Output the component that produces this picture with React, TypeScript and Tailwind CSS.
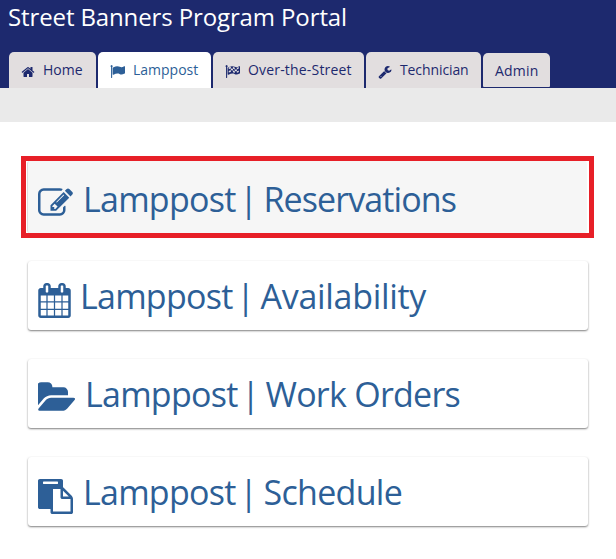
import type { ReactNode } from "react";

type IconProps = { d: string; box: string; className: string };

function Icon({ d, box, className }: IconProps) {
  return (
    <svg viewBox={box} fill="currentColor" className={className} aria-hidden="true">
      <path d={d} fillRule="evenodd" />
    </svg>
  );
}

const HOME =
  "M1472 992v480q0 26-19 45t-45 19h-384v-384h-256v384h-384q-26 0-45-19t-19-45v-480q0-1 .5-3t.5-3l575-474 575 474q1 2 1 6zm223-69l-62 74q-8 9-21 11h-3q-13 0-21-7l-692-577-692 577q-12 8-24 7-13-2-21-11l-62-74q-8-10-7-23.5t11-21.5l719-599q32-26 76-26t76 26l244 204v-195q0-14 9-23t23-9h192q14 0 23 9t9 23v408l219 182q10 8 11 21.5t-7 23.5z";
const FLAG =
  "M320 256q0 72-64 110v1266q0 13-9.5 22.5t-22.5 9.5h-64q-13 0-22.5-9.5t-9.5-22.5v-1266q-64-38-64-110 0-53 37.5-90.5t90.5-37.5 90.5 37.5 37.5 90.5zm1472 64v763q0 25-12.5 38.5t-39.5 27.5q-215 116-369 116-61 0-123.5-22t-108.5-48-115.5-48-142.5-22q-192 0-464 146-17 9-33 9-26 0-45-19t-19-45v-742q0-32 31-55 21-14 79-43 236-120 421-120 107 0 200 29t219 88q38 19 88 19 54 0 117.5-21t110-47 88-47 54.5-21q26 0 45 19t19 45z";
const CHECKERED =
  FLAG +
  "M448 420q130-68 250-84v210q-120 12-250 82zM948 362q110 28 220 84v210q-100-52-220-84zM1418 442q110-28 230-98v208q-110 66-230 96zM698 546q130-14 250 26v210q-120-34-250-24zM1168 656q120 28 250-8v208q-130 34-250 10zM448 838q130-68 250-80v196q-120 8-250 72zM948 782q110 24 220 84v206q-110-58-220-84zM1418 856q120-34 230-94v206q-110 60-230 88z";
const WRENCH =
  "M448 1472q0-26-19-45t-45-19-45 19-19 45 19 45 45 19 45-19 19-45zm644-420l-682 682q-37 37-90 37-52 0-91-37l-106-108q-38-36-38-90 0-53 38-91l681-681q39 98 114.5 173.5t173.5 114.5zm634-435q0 39-23 106-47 134-164.5 217.5t-258.5 83.5q-185 0-316.5-131.5t-131.5-316.5 131.5-316.5 316.5-131.5q58 0 121.5 16.5t107.5 46.5q16 11 16 28t-16 28l-293 169v224l193 107q5-3 79-48.5t135.5-81 70.5-35.5q15 0 23.5 10t8.5 25z";
const EDIT =
  "M888 1184l116-116-152-152-116 116v56h96v96h56zm440-720q-16-16-33 1l-350 350q-17 17-1 33t33-1l350-350q17-17 1-33zm80 594v190q0 119-84.5 203.5t-203.5 84.5h-832q-119 0-203.5-84.5t-84.5-203.5v-832q0-119 84.5-203.5t203.5-84.5h832q63 0 117 25 15 7 18 23 3 17-9 29l-49 49q-14 14-32 8-23-6-45-6h-832q-66 0-113 47t-47 113v832q0 66 47 113t113 47h832q66 0 113-47t47-113v-126q0-13 9-22l64-64q15-15 35-7t20 29zm-96-738l288 288-672 672h-288v-288zm444 132l-92 92-288-288 92-92q28-28 68-28t68 28l152 152q28 28 28 68t-28 68z";
const CALENDAR =
  "M192 1664h288v-288h-288v288zm352 0h320v-288h-320v288zm-352-352h288v-320h-288v320zm352 0h320v-320h-320v320zm-352-384h288v-288h-288v288zm736 736h320v-288h-320v288zm-384-736h320v-288h-320v288zm768 736h288v-288h-288v288zm-384-352h320v-320h-320v320zm-352-864v-288q0-13-9.5-22.5t-22.5-9.5h-64q-13 0-22.5 9.5t-9.5 22.5v288q0 13 9.5 22.5t22.5 9.5h64q13 0 22.5-9.5t9.5-22.5zm736 864h288v-320h-288v320zm-384-384h320v-288h-320v288zm384 0h288v-288h-288v288zm32-480v-288q0-13-9.5-22.5t-22.5-9.5h-64q-13 0-22.5 9.5t-9.5 22.5v288q0 13 9.5 22.5t22.5 9.5h64q13 0 22.5-9.5t9.5-22.5zm384-64v1280q0 52-38 90t-90 38h-1408q-52 0-90-38t-38-90v-1280q0-52 38-90t90-38h128v-96q0-66 47-113t113-47h64q66 0 113 47t47 113v96h384v-96q0-66 47-113t113-47h64q66 0 113 47t47 113v96h128q52 0 90 38t38 90z";
const FOLDER =
  "M1815 952q0 31-31 66l-336 396q-43 51-120.5 86.5t-143.5 35.5h-1088q-34 0-60.5-13t-26.5-43q0-31 31-66l336-396q43-51 120.5-86.5t143.5-35.5h1088q34 0 60.5 13t26.5 43zm-343-344v160h-832q-94 0-197 47.5t-164 119.5l-337 396-5 6q0-4-.5-12.5t-.5-12.5v-960q0-92 66-158t158-66h320q92 0 158 66t66 158v32h544q92 0 158 66t66 158z";
const PASTE =
  "M768 1664h896v-640h-416q-40 0-68-28t-28-68v-416h-384v1152zm256-1440v-64q0-13-9.5-22.5t-22.5-9.5h-704q-13 0-22.5 9.5t-9.5 22.5v64q0 13 9.5 22.5t22.5 9.5h704q13 0 22.5-9.5t9.5-22.5zm256 672h299l-299-299v299zm512 128v672q0 40-28 68t-68 28h-960q-40 0-68-28t-28-68v-160h-544q-40 0-68-28t-28-68v-1344q0-40 28-68t68-28h1088q40 0 68 28t28 68v328q21 13 36 28l408 408q28 28 48 76t20 88z";

function Tab({ className, children }: { className: string; children: ReactNode }) {
  return (
    <a className={`flex shrink-0 items-center whitespace-nowrap rounded-t-[5px] text-[14px] leading-none ${className}`}>
      {children}
    </a>
  );
}

function Card({ className, children }: { className: string; children: ReactNode }) {
  return <a className={`flex items-start rounded-[3px] pl-[10px] ${className}`}>{children}</a>;
}

function Title({ text, className }: { text: string; className: string }) {
  return (
    <span className="flex whitespace-nowrap pl-[10px] text-[34px] leading-[48px]">
      <span className="tracking-[-0.75px]">Lamppost</span>
      <span className="mr-[3px] flex w-[25px] justify-center pl-px">|</span>
      <span className={className}>{text}</span>
    </span>
  );
}

const raised = "h-[69px] pt-[11px] shadow-[0_1px_2px_rgba(0,0,0,0.5)]";

export default function App() {
  return (
    <div className="h-[559px] w-[616px] overflow-hidden bg-white font-['Open_Sans','Noto_Sans',sans-serif] text-[#2d5f97]">
      <header className="flex h-[88px] flex-col justify-between bg-[#1d296e]">
        <h1 className="pl-[8px] pt-[1px] text-[24px] leading-[32px] tracking-[-0.12px] text-white">
          Street Banners Program Portal
        </h1>
        <nav className="flex h-[36px] gap-[2px] pl-[9px] text-[#1d296e]">
          <Tab className="w-[87px] bg-[#e2dedf] pl-[12px]">
            <Icon d={HOME} box="0 0 1792 1792" className="mr-[8px] mt-[3px] size-[14px]" />
            <span>Home</span>
          </Tab>
          <Tab className="w-[113px] bg-white pl-[12px] text-[#2d5f97]">
            <Icon d={FLAG} box="0 0 1792 1792" className="mr-[8px] mt-[2px] size-[15px]" />
            <span>Lamppost</span>
          </Tab>
          <Tab className="w-[151px] bg-[#e2dedf] pl-[12px]">
            <Icon d={CHECKERED} box="0 0 1792 1792" className="mr-[8px] mt-[2px] size-[15px]" />
            <span className="tracking-[0.18px]">Over-the-Street</span>
          </Tab>
          <Tab className="w-[115px] bg-[#e2dedf] pl-[12px]">
            <Icon d={WRENCH} box="0 0 1792 1792" className="mr-[8px] mt-[3px] size-[14px]" />
            <span className="tracking-[-0.1px]">Technician</span>
          </Tab>
          <Tab className="mt-px h-[34px] w-[67px] rounded-b-[1px] bg-[#e2dedf] pl-[12px] pt-px">
            <span className="tracking-[0.2px]">Admin</span>
          </Tab>
        </nav>
      </header>
      <div className="h-[34px] bg-[#eaeaea]" />
      <main className="flex flex-col pl-[21px] pt-[34px]">
        <div className="flex h-[82px] w-[573px] flex-col border-[5px] border-[#e71f27] px-px">
          <Card className="h-[72px] w-[560px] border-l border-[#dedede] bg-[#f6f6f6] pt-[14px]">
            <Icon d={EDIT} box="0 128 1792 1408" className="mt-[13px] h-[28px] w-[35px]" />
            <Title text="Reservations" className="tracking-[-0.9px]" />
          </Card>
        </div>
        <div className="flex w-[567px] flex-col gap-[29px] pl-[7px] pt-[23px]">
          <Card className={raised}>
            <Icon d={CALENDAR} box="64 0 1664 1792" className="-mr-px mt-[11px] h-[35px] w-[33px]" />
            <Title text="Availability" className="tracking-[-0.3px]" />
          </Card>
          <Card className={raised}>
            <Icon d={FOLDER} box="0 128 1815 1408" className="mt-[12px] h-[29px] w-[37px]" />
            <Title text="Work Orders" className="tracking-[-0.75px]" />
          </Card>
          <Card className={raised}>
            <Icon d={PASTE} box="0 0 1792 1792" className="mt-[11px] size-[35px]" />
            <Title text="Schedule" className="tracking-[-0.7px]" />
          </Card>
        </div>
      </main>
    </div>
  );
}
